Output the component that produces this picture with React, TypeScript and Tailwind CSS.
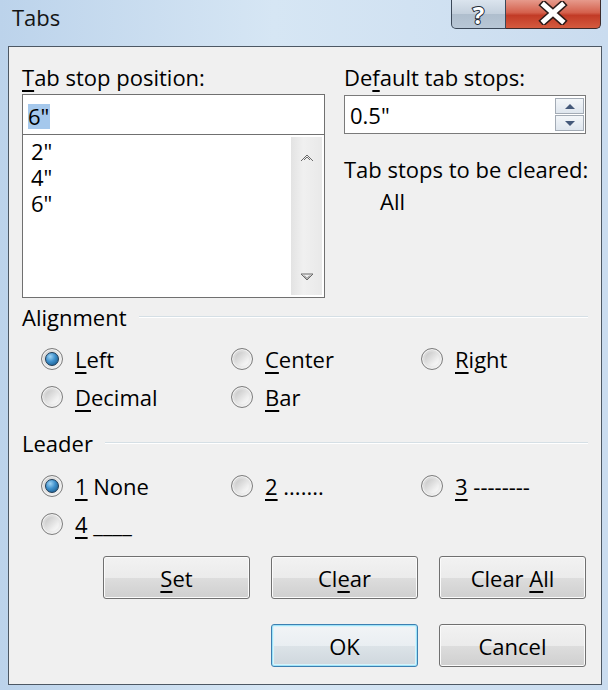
import React from "react";

const font = "font-['Open_Sans',sans-serif]";

function U({ children }: { children: React.ReactNode }) {
  return <span className="underline decoration-[1.5px] underline-offset-[4px]">{children}</span>;
}

function Radio({ checked }: { checked?: boolean }) {
  return (
    <span className="flex h-[22px] w-[22px] shrink-0 items-center justify-center rounded-full border border-[#7d7d7d] bg-[linear-gradient(135deg,#cfcfcf,#f7f7f7)] shadow-[inset_0_0_0_1px_#f2f2f2]">
      {checked ? (
        <span className="h-[14px] w-[14px] rounded-full border border-[#1d3a55] bg-[radial-gradient(circle_at_35%_30%,#9fd4f5_0%,#3d8fcb_45%,#14507e_100%)]" />
      ) : (
        <span className="h-[14px] w-[14px] rounded-full bg-[linear-gradient(135deg,#c4c4c4,#efefef_70%,#fbfbfb)]" />
      )}
    </span>
  );
}

function Option({ checked, children }: { checked?: boolean; children: React.ReactNode }) {
  return (
    <div className="flex w-[190px] shrink-0 items-center gap-[12px]">
      <Radio checked={checked} />
      <span className="whitespace-nowrap">{children}</span>
    </div>
  );
}

function GroupHeader({ label }: { label: string }) {
  return (
    <div className="flex h-[28px] items-center pr-[13px] leading-[28px]">
      <span>{label}</span>
      <div className="ml-[12px] h-[2px] flex-1 border-t border-b border-t-[#d5dfe5] border-b-white" />
    </div>
  );
}

function Btn({ children, def }: { children: React.ReactNode; def?: boolean }) {
  return (
    <button
      className={
        def
          ? "h-[43px] w-[147px] rounded-[3px] border border-[#3c7fb1] bg-[linear-gradient(to_bottom,#f2f4f6_0%,#e9eef2_50%,#dce3e8_51%,#cfd7dd_100%)] text-[22px] leading-none text-black shadow-[inset_0_0_0_1px_#9fe3f8,inset_0_0_0_2px_#d8f3fb]"
          : "h-[43px] w-[147px] rounded-[3px] border border-[#707070] bg-[linear-gradient(to_bottom,#f2f2f2_0%,#ebebeb_50%,#dddddd_51%,#cfcfcf_100%)] text-[22px] leading-none text-black shadow-[inset_0_0_0_1px_#fbfbfb]"
      }
    >
      {children}
    </button>
  );
}

function TitleBar() {
  return (
    <div className="flex h-[46px] shrink-0 items-start justify-between">
      <span className="ml-[12px] mt-[3px] text-[22px] leading-[28px] text-[#141414]">Tabs</span>
      <div className="mr-[7px] flex h-[29px]">
        <div className="flex w-[55px] items-center justify-center rounded-bl-[5px] border border-t-0 border-[#3b4858] bg-[linear-gradient(to_bottom,#dbe4ee,#c3cfdc_50%,#afbecd_51%,#b8c7d6)]">
          <span className="mt-[2px] text-[24px] font-bold leading-[26px] text-white [-webkit-text-stroke:2px_#1e2a38] [paint-order:stroke_fill]">?</span>
        </div>
        <div className="flex w-[95px] items-center justify-center rounded-br-[5px] border border-l-0 border-t-0 border-[#3b2a2a] bg-[linear-gradient(to_bottom,#e69a8c,#d4604c_45%,#c23b26_55%,#d45a3e)]">
          <svg width="32" height="24" viewBox="0 0 32 24" className="-mt-[2px]">
            <path d="M7 4 L25 20 M25 4 L7 20" stroke="#2c1a18" strokeWidth="8" strokeLinecap="square" />
            <path d="M7 4 L25 20 M25 4 L7 20" stroke="#ffffff" strokeWidth="5" strokeLinecap="square" />
          </svg>
        </div>
      </div>
    </div>
  );
}

function ScrollArrow({ down }: { down?: boolean }) {
  return (
    <svg width="14" height="8" viewBox="0 0 14 8">
      {down ? (
        <path d="M1 1 H13 L7 7 Z M4 2.5 L7 5.5 L10 2.5" fill="none" stroke="#6a6a6a" strokeWidth="1" />
      ) : (
        <path d="M1 7 L7 1 L13 7 M4 6 L7 3 L10 6" fill="none" stroke="#6a6a6a" strokeWidth="1" />
      )}
    </svg>
  );
}

export default function App() {
  return (
    <div
      className={`${font} flex h-[690px] w-[608px] flex-col overflow-hidden bg-[linear-gradient(to_right,#bcd3eb,#d6e6f4_45%,#cadcef)] text-black`}
    >
      <TitleBar />
      <div className="mb-[5px] ml-[8px] flex w-[594px] flex-1 flex-col border border-[#4d5864] bg-[#f0f0f0] text-[22px]">
        {/* top section */}
        <div className="flex pl-[13px] pt-[16px]">
          <div className="w-[303px] shrink-0">
            <div className="leading-[28px]">
              <U>T</U>ab stop position:
            </div>
            <div className="mt-[3px] h-[41px] border border-[#707070] bg-white pl-[5px] pt-[5px]">
              <span className="inline-block bg-[#a5c8ec] pr-[1px] leading-[25px]">6"</span>
            </div>
            <div className="flex h-[163px] border-x border-b border-[#707070] bg-white">
              <div className="flex flex-1 flex-col pl-[8px] pt-[4px]">
                <div className="h-[26px] leading-[24px]">2"</div>
                <div className="h-[26px] leading-[24px]">4"</div>
                <div className="h-[26px] leading-[24px]">6"</div>
              </div>
              <div className="my-[2px] mr-[2px] flex w-[31px] flex-col items-center justify-between bg-[linear-gradient(to_right,#e3e3e3,#f0f0f0_40%,#e9e9e9)] pb-[14px] pt-[17px]">
                <ScrollArrow />
                <ScrollArrow down />
              </div>
            </div>
          </div>
          <div className="ml-[19px] w-[256px] shrink-0">
            <div className="leading-[28px]">
              De<U>f</U>ault tab stops:
            </div>
            <div className="mt-[4px] flex h-[39px] w-[242px] items-center border border-[#7a7a7a] bg-white pl-[5px]">
              <span className="flex-1 leading-[28px]">0.5"</span>
              <div className="mr-[1px] flex h-[33px] w-[29px] flex-col gap-[1px]">
                <div className="flex flex-1 items-center justify-center border border-[#a3abb5] bg-[linear-gradient(to_bottom,#f3f6f9,#dfe6ee)]">
                  <svg width="12" height="7" viewBox="0 0 12 7">
                    <path d="M1 6 L6 1 L11 6 Z" fill="#44597a" />
                  </svg>
                </div>
                <div className="flex flex-1 items-center justify-center border border-[#a3abb5] bg-[linear-gradient(to_bottom,#f3f6f9,#dfe6ee)]">
                  <svg width="12" height="7" viewBox="0 0 12 7">
                    <path d="M1 1 L11 1 L6 6 Z" fill="#44597a" />
                  </svg>
                </div>
              </div>
            </div>
            <div className="mt-[21px] whitespace-nowrap leading-[28px]">Tab stops to be cleared:</div>
            <div className="mt-[4px] pl-[36px] leading-[28px]">All</div>
          </div>
        </div>

        {/* alignment */}
        <div className="mt-[5px] pl-[13px]">
          <GroupHeader label="Alignment" />
          <div className="mt-[9px] pl-[19px]">
            <div className="flex h-[38px]">
              <Option checked>
                <U>L</U>eft
              </Option>
              <Option>
                <U>C</U>enter
              </Option>
              <Option>
                <U>R</U>ight
              </Option>
            </div>
            <div className="flex h-[38px]">
              <Option>
                <U>D</U>ecimal
              </Option>
              <Option>
                <U>B</U>ar
              </Option>
            </div>
          </div>
        </div>

        {/* leader */}
        <div className="mt-[13px] pl-[13px]">
          <GroupHeader label="Leader" />
          <div className="mt-[10px] pl-[19px]">
            <div className="flex h-[38px]">
              <Option checked>
                <U>1</U> None
              </Option>
              <Option>
                <U>2</U> .......
              </Option>
              <Option>
                <U>3</U> --------
              </Option>
            </div>
            <div className="flex h-[38px]">
              <Option>
                <U>4</U> ____
              </Option>
            </div>
          </div>
        </div>

        {/* buttons */}
        <div className="mt-[13px] flex justify-end gap-[21px] pr-[15px]">
          <Btn>
            <U>S</U>et
          </Btn>
          <Btn>
            Cl<U>e</U>ar
          </Btn>
          <Btn>
            Clear <U>A</U>ll
          </Btn>
        </div>
        <div className="mt-[25px] flex justify-end gap-[21px] pr-[15px]">
          <Btn def>OK</Btn>
          <Btn>Cancel</Btn>
        </div>
      </div>
    </div>
  );
}
